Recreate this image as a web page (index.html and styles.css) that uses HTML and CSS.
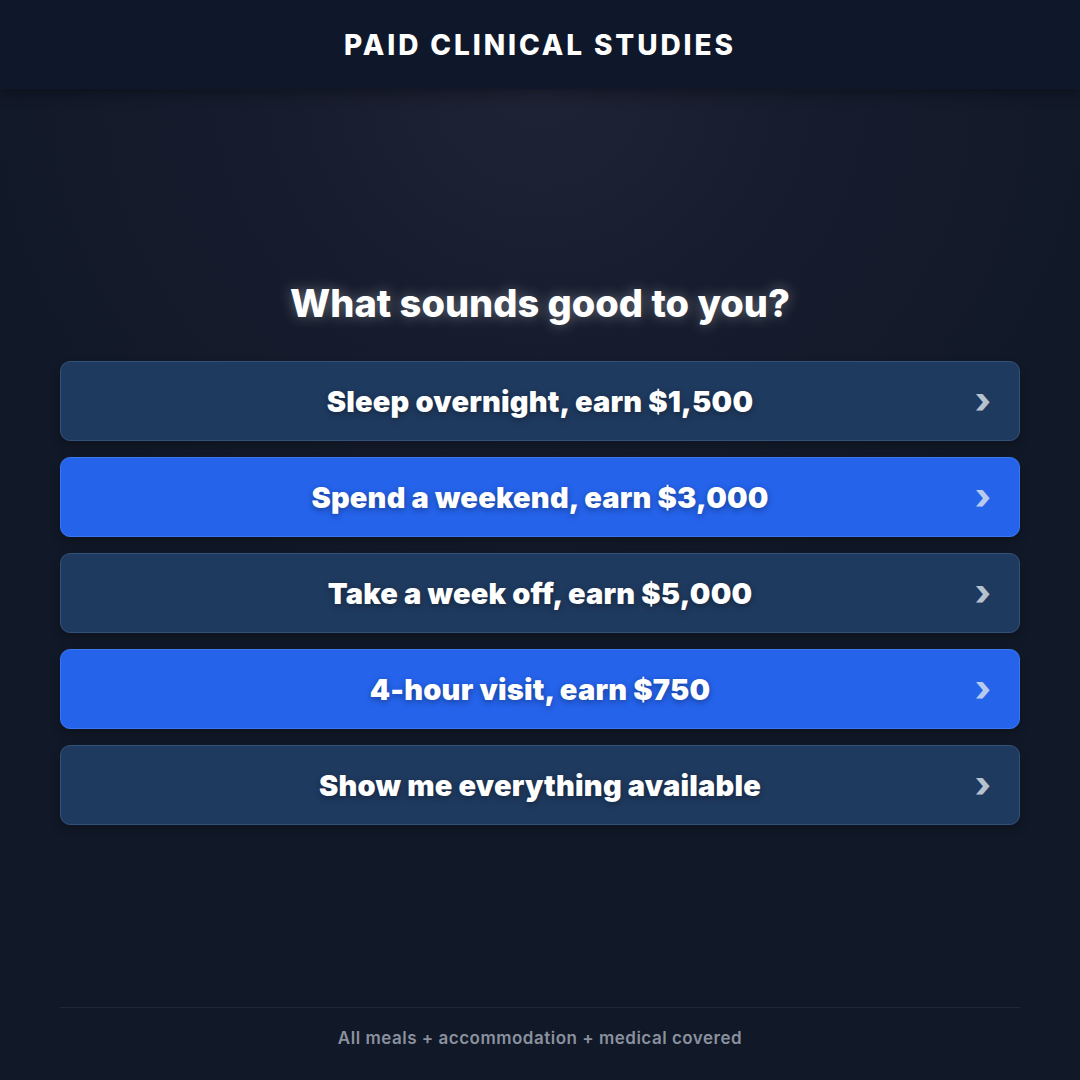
FILE: index.html
```html
<!DOCTYPE html>
<html lang="en">
<head>
<meta charset="utf-8">
<title>Paid Clinical Studies</title>
<link rel="stylesheet" href="styles.css">
</head>
<body>
<div class="page">
  <header class="topbar">
    <h1 class="brand">PAID CLINICAL STUDIES</h1>
  </header>
  <main class="content">
    <h2 class="question">What sounds good to you?</h2>
    <div class="options">
      <a class="option option-dark" href="#"><span class="label">Sleep overnight, earn $1,500</span><span class="chev">›</span></a>
      <a class="option option-blue" href="#"><span class="label">Spend a weekend, earn $3,000</span><span class="chev">›</span></a>
      <a class="option option-dark" href="#"><span class="label">Take a week off, earn $5,000</span><span class="chev">›</span></a>
      <a class="option option-blue" href="#"><span class="label">4-hour visit, earn $750</span><span class="chev">›</span></a>
      <a class="option option-dark" href="#"><span class="label">Show me everything available</span><span class="chev">›</span></a>
    </div>
  </main>
  <footer class="footer">
    <p class="note">All meals + accommodation + medical covered</p>
  </footer>
</div>
</body>
</html>
```

FILE: styles.css
```css
* { box-sizing: border-box; }
html, body { margin: 0; padding: 0; }
body {
  width: 1080px;
  height: 1080px;
  overflow: hidden;
  font-family: Inter, "Liberation Sans", sans-serif;
  color: #fff;
  background: #111827;
}
.page {
  width: 1080px;
  height: 1080px;
  display: flex;
  flex-direction: column;
  background: radial-gradient(ellipse 560px 520px at 540px 90px, #1e2335 0%, #171d2e 45%, #111827 100%);
}
.topbar {
  height: 89px;
  flex: none;
  display: flex;
  align-items: center;
  justify-content: center;
  background: #0f172a;
  box-shadow: 0 4px 14px rgba(0, 0, 0, 0.35);
  position: relative;
  z-index: 1;
}
.brand {
  margin: 0;
  font-size: 28px;
  font-weight: 800;
  letter-spacing: 2.9px;
  line-height: 1;
}
.content {
  flex: 1;
  padding: 192px 60px 0;
  display: flex;
  flex-direction: column;
  align-items: stretch;
}
.question {
  margin: 0 0 36px;
  text-align: center;
  font-size: 38px;
  font-weight: 800;
  line-height: 44px;
  letter-spacing: 0;
  text-shadow: 0 0 14px rgba(255, 255, 255, 0.35);
}
.options {
  display: flex;
  flex-direction: column;
  gap: 16px;
}
.option {
  position: relative;
  height: 80px;
  border-radius: 10px;
  display: flex;
  align-items: center;
  justify-content: center;
  text-decoration: none;
  color: #fff;
  box-shadow: 0 4px 10px rgba(0, 0, 0, 0.25);
}
.option-dark {
  background: #1f3a5f;
  border: 1px solid #32507a;
}
.option-blue {
  background: #2563eb;
  border: 1px solid #3b76f3;
}
.label {
  font-size: 29px;
  font-weight: 900;
  letter-spacing: 0.2px;
  text-shadow: 0 2px 6px rgba(0, 0, 0, 0.35);
}
.chev {
  position: absolute;
  right: 28px;
  top: 50%;
  transform: translateY(-54%);
  font-size: 36px;
  font-weight: 800;
  line-height: 1;
  color: rgba(226, 232, 240, 0.8);
}
.footer {
  flex: none;
  margin: 0 60px;
  height: 73px;
  padding-top: 20px;
  border-top: 1px solid #1f2937;
  display: flex;
  align-items: flex-start;
  justify-content: center;
}
.note {
  margin: 0;
  font-size: 17px;
  line-height: 20px;
  font-weight: 600;
  letter-spacing: 0.5px;
  color: #8a919e;
}
```
